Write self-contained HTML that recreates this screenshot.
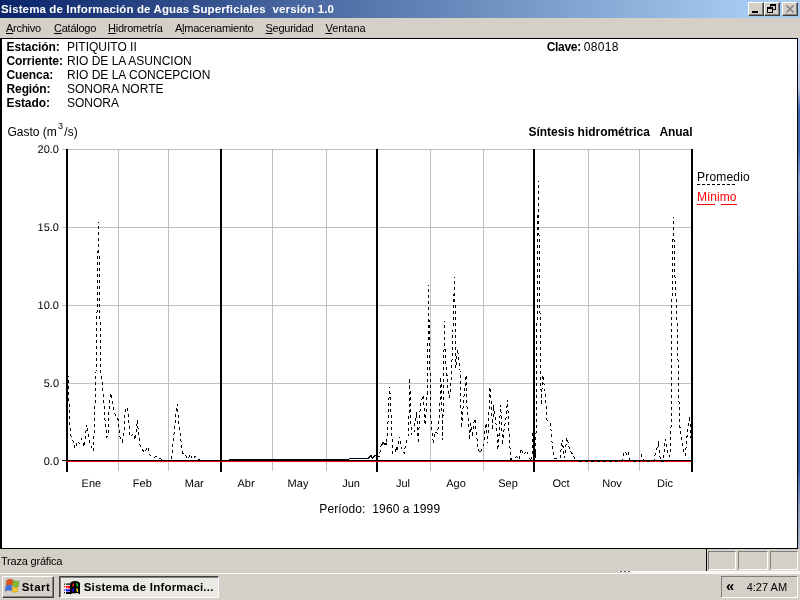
<!DOCTYPE html>
<html lang="es">
<head>
<meta charset="utf-8">
<title>Sistema de Información de Aguas Superficiales versión 1.0</title>
<style>
html,body{margin:0;padding:0;}
body{width:800px;height:600px;overflow:hidden;position:relative;will-change:transform;background:#d4d0c8;font-family:"Liberation Sans",Arial,sans-serif;font-size:11px;color:#000;}
.abs{position:absolute;white-space:pre;}
#title{left:0;top:0;width:800px;height:18px;background:linear-gradient(to right,#0a246a 0px,#a6caf0 746px,#a6caf0 800px);}
#title .t{left:1px;top:3px;color:#fff;font-weight:bold;font-size:11.5px;line-height:13px;letter-spacing:0.13px;}
.tb{position:absolute;top:2px;width:16px;height:14px;background:#d4d0c8;box-sizing:border-box;border:1px solid;border-color:#fff #404040 #404040 #fff;box-shadow:inset -1px -1px 0 #808080;}
#menu{left:0;top:18px;width:800px;height:20px;background:#d4d0c8;}
#menu span{position:absolute;top:4px;line-height:13px;font-size:11px;white-space:pre;letter-spacing:-0.25px;}
#menu u{text-decoration:underline;text-underline-offset:1px;}
#mdi{left:0;top:38px;width:798px;height:511px;background:#fff;box-sizing:border-box;border:1px solid #000;border-left-width:2px;}
#strip{left:798px;top:38px;width:2px;height:511px;background:linear-gradient(to bottom,#c8d4ee 0%,#b4c4e6 10%,#3a68b0 14%,#3a68b0 22%,#8aa4d4 28%,#5078b8 40%,#2c5aa8 52%,#2c5aa8 84%,#8a9cc0 92%,#b0b8c8 100%);}
.lbl{font-size:12px;line-height:14px;font-weight:bold;letter-spacing:-0.1px;}
.val{font-size:12px;line-height:14px;}
#status{left:0;top:549px;width:800px;height:24px;background:#d4d0c8;}
.sp{position:absolute;top:2px;height:19px;box-sizing:border-box;border:1px solid;border-color:#808080 #fff #fff #808080;}
#taskbar{left:0;top:573px;width:800px;height:27px;background:#d4d0c8;border-top:1px solid #fff;box-sizing:border-box;}
.btn{position:absolute;box-sizing:border-box;background:#d4d0c8;border:1px solid;border-color:#fff #404040 #404040 #fff;box-shadow:inset -1px -1px 0 #808080;}
</style>
</head>
<body>
<div id="title" class="abs"><span class="abs t">Sistema de Información de Aguas Superficiales  versión 1.0</span>
<div class="tb" style="left:748px"><svg width="14" height="12" style="position:absolute;left:0;top:0"><rect x="3" y="8" width="6" height="2" fill="#000"/></svg></div>
<div class="tb" style="left:764px"><svg width="14" height="12" style="position:absolute;left:0;top:0" shape-rendering="crispEdges"><rect x="5" y="1" width="6" height="2" fill="#000"/><rect x="5" y="1" width="1" height="3" fill="#000"/><rect x="10" y="1" width="1" height="6" fill="#000"/><rect x="8" y="6" width="3" height="1" fill="#000"/><rect x="2" y="4" width="6" height="2" fill="#000"/><rect x="2" y="4" width="1" height="6" fill="#000"/><rect x="7" y="4" width="1" height="6" fill="#000"/><rect x="2" y="9" width="6" height="1" fill="#000"/></svg></div>
<div class="tb" style="left:782px"><svg width="14" height="12" style="position:absolute;left:0;top:0"><path d="M3.5 2.5 L10.5 9.5 M10.5 2.5 L3.5 9.5" stroke="#808080" stroke-width="1.6" fill="none"/></svg></div>
</div>
<div id="menu" class="abs">
<span style="left:6px"><u>A</u>rchivo</span>
<span style="left:54px"><u>C</u>atálogo</span>
<span style="left:108px"><u>H</u>idrometría</span>
<span style="left:175px">A<u>l</u>macenamiento</span>
<span style="left:265.5px"><u>S</u>eguridad</span>
<span style="left:325.5px;letter-spacing:-0.05px"><u>V</u>entana</span>
</div>
<div id="mdi" class="abs"></div>
<div id="strip" class="abs"></div>
<div class="abs" style="left:2px;top:39px;width:796px;height:509px;overflow:hidden">
<svg id="chart" style="position:absolute;left:0;top:0;display:block" width="796" height="509" viewBox="2 39 796 509" shape-rendering="crispEdges">
<rect x="62" y="149" width="630" height="1" fill="#c0c0c0"/>
<rect x="62" y="227" width="630" height="1" fill="#c0c0c0"/>
<rect x="62" y="305" width="630" height="1" fill="#c0c0c0"/>
<rect x="62" y="383" width="630" height="1" fill="#c0c0c0"/>
<rect x="118" y="149" width="1" height="322" fill="#c0c0c0"/>
<rect x="168" y="149" width="1" height="322" fill="#c0c0c0"/>
<rect x="272" y="149" width="1" height="322" fill="#c0c0c0"/>
<rect x="326" y="149" width="1" height="322" fill="#c0c0c0"/>
<rect x="430" y="149" width="1" height="322" fill="#c0c0c0"/>
<rect x="483" y="149" width="1" height="322" fill="#c0c0c0"/>
<rect x="588" y="149" width="1" height="322" fill="#c0c0c0"/>
<rect x="639" y="149" width="1" height="322" fill="#c0c0c0"/>
<rect x="62" y="460" width="630" height="1" fill="#000"/>
<rect x="66" y="461" width="626" height="1" fill="#f00"/>
<polyline points="98.5,222 96.0,373.3 95.0,403.3 94.2,428.3 93.3,451.2 91.7,447.5 90.0,443.3 88.3,435.0 86.7,424.7 84.2,447.0 81.7,438.7 79.7,443.7 78.0,441.3 76.7,444.2 74.7,448.7 73.0,440.8 71.7,438.3 70.3,433.3 69.4,412 68.8,395 68.4,376" fill="none" stroke="#000" stroke-width="1" stroke-dasharray="3 3" stroke-dashoffset="1.5"/>
<polyline points="98.5,222 100.8,371.7 102.5,383.3 103.7,401.7 105.0,420.0 107.0,437.5 108.3,431.7 109.2,403.3 110.8,393.3 112.5,400.0 114.2,411.7 116.7,418.3 118.3,420.0 120.0,436.7 122.5,441.7 124.2,428.3 125.3,410.0 127.2,407.5 128.3,415.0 130.0,435.0 130.8,436.7 133.3,433.3 135.0,440.0 137.5,420.0 138.3,433.3 140.0,445.0 142.5,450.0 145.0,452.5 147.5,446.7 150.0,455.0 153.3,457.5 156.7,456.7 161.7,459.2 168.3,460.8" fill="none" stroke="#000" stroke-width="1" stroke-dasharray="3 3" stroke-dashoffset="1.5"/>
<polyline points="428.3,285 428.0,340 427.5,390.0 425.8,415.0 425.0,425.0 423.3,395.0 420.8,403.3 419.5,416.7 418.3,443.3 416.7,411.7 415.0,423.3 413.7,434.2 411.3,435.0 410.3,403.3 409.7,378.3 409.2,411.7 408.0,436.7 405.8,443.3 404.2,453.3 402.5,451.7 400.8,443.3 399.2,436.7 397.5,451.7 395.8,446.7 395.0,453.3 392.5,453.3 391.3,420.0 390.3,400.0 389.7,386.7 388.7,403.3 387.5,436.7 385.8,445.0 383.3,442.5 380.8,446.7 379.2,456.7 377.0,457.5 375,455 373,458 371,455 369,457 368,458.5 350,458.5 349,459 229,459 229,460 203.3,460.0 200.0,460.0 197.5,458.3 195.0,456.3 192.5,459.2 190.3,454.2 188.0,459.2 185.8,455.8 183.3,455.0 181.7,446.7 180.0,433.3 178.3,418.3 177.5,404.2 175.8,415.0 175.0,425.0 173.3,440.0 172.5,450.0 170.8,460.0 168.3,460.8" fill="none" stroke="#000" stroke-width="1" stroke-dasharray="3 3" stroke-dashoffset="1.5"/>
<polyline points="428.3,285 429.2,330 430,370 430.0,383.3 430.3,411.7 431.7,426.7 433.3,443.3" fill="none" stroke="#000" stroke-width="1" stroke-dasharray="3 3" stroke-dashoffset="1.5"/>
<polyline points="444.5,321 444.0,350 443.3,403.3 442.5,440.0 441.7,395.0 440.8,376.7 440.0,400.0 439.2,420.0 437.5,433.3 435.0,431.7 433.3,443.3" fill="none" stroke="#000" stroke-width="1" stroke-dasharray="3 3" stroke-dashoffset="1.5"/>
<polyline points="444.5,321 445.3,360 447.5,380.0 448.3,395.0 449.7,398.3" fill="none" stroke="#000" stroke-width="1" stroke-dasharray="3 3" stroke-dashoffset="1.5"/>
<polyline points="454.5,277 453,330 451.7,370.0 450.8,386.7 449.7,398.3" fill="none" stroke="#000" stroke-width="1" stroke-dasharray="3 3" stroke-dashoffset="1.5"/>
<polyline points="454.5,277 455.5,330 456,368 456.5,355 457.5,349 459,360 460,370 460.8,403.3 461.7,428.3 463.3,403.3 465.0,386.7 466.2,375.0 466.7,403.3 468.3,420.0 469.7,440.0 470.8,423.3 472.5,436.7 473.3,425.0 475.0,418.3 476.7,436.7 478.3,450.0 480.3,453.3 482.5,446.7 484.2,443.3 485.0,428.3 486.3,423.3 487.5,443.3 488.7,420.0 490.0,386.7 491.3,403.3 492.5,430.0 493.7,405.0 495.0,416.7 496.7,428.3 497.8,450.0 499.2,433.3 500.5,405.0 501.7,421.7 502.5,445.0 504.2,428.3 505.8,420.0 507.5,400.0 508.7,426.7 510.0,448.3 510.8,459.2 514.2,458.3 516.7,456.7 519.2,459.2 521.3,448.3 523.3,455.0 525.0,453.3 527.0,450.8 529.2,458.3 530.8,460.0" fill="none" stroke="#000" stroke-width="1" stroke-dasharray="3 3" stroke-dashoffset="1.5"/>
<polyline points="538.3,181 535.8,458 534.2,447 534.2,386.7 533.3,420.0 532.5,451.7 530.8,460.0" fill="none" stroke="#000" stroke-width="1" stroke-dasharray="3 3" stroke-dashoffset="1.5"/>
<polyline points="538.3,181 541.2,405 542.7,374.6 545.5,394 547,420 550.3,422 552.5,448 554.6,458.5 560,458 562.2,439.6 564.4,458 567,437.4 569.8,450.4 573,454.7 576.3,461.5" fill="none" stroke="#000" stroke-width="1" stroke-dasharray="3 3" stroke-dashoffset="1.5"/>
<polyline points="673.6,217 672.2,268 671.8,330 671.1,422.5 670.5,455.0 669.2,456.7 667.6,451.8 665.1,438.8 663.5,461.5 661.1,461.5 659.4,455.0 658.6,441.2 656.2,451.8 654.6,456.7 653.7,461.5 644.0,461.5 641.5,455.0 639.6,461.5 630.2,461.5 628.5,452.6 626.9,455.0 625.3,451.5 623.7,452.6 622,461.5 576.3,461.5" fill="none" stroke="#000" stroke-width="1" stroke-dasharray="3 3" stroke-dashoffset="1.5"/>
<polyline points="673.6,217 674.4,263 677.4,330 678.6,390 679.8,425.8 681.4,438.8 683.8,453.4 685.4,455.0 687.1,435.5 689.5,416.0 691.1,438.8" fill="none" stroke="#000" stroke-width="1" stroke-dasharray="3 3" stroke-dashoffset="1.5"/>
<rect x="229" y="459" width="120" height="1" fill="#000"/>
<rect x="349" y="458" width="20" height="1" fill="#000"/>
<polyline points="368,458.5 369.5,457 371,455.5 372.5,458.5 374,456.5 376,455.5" fill="none" stroke="#000" stroke-width="1"/>
<polyline points="381.5,445.5 383,442.5 384.5,444.5 386,443.5 387.5,445.5" fill="none" stroke="#000" stroke-width="1"/>
<rect x="66" y="149" width="2" height="323" fill="#000"/>
<rect x="220" y="149" width="2" height="323" fill="#000"/>
<rect x="376" y="149" width="2" height="323" fill="#000"/>
<rect x="533" y="149" width="2" height="323" fill="#000"/>
<rect x="691" y="149" width="2" height="323" fill="#000"/>
<rect x="66" y="461" width="2" height="1" fill="#d00000"/>
<rect x="220" y="461" width="2" height="1" fill="#d00000"/>
<rect x="376" y="461" width="2" height="1" fill="#d00000"/>
<rect x="533" y="461" width="2" height="1" fill="#d00000"/>
<line x1="697" y1="184.5" x2="736" y2="184.5" stroke="#000" stroke-dasharray="3 2"/>
<rect x="697" y="204" width="18" height="1" fill="#f00"/><rect x="721" y="204" width="16" height="1" fill="#f00"/>
<g font-family="'Liberation Sans', Arial, sans-serif" font-size="11px" fill="#000" text-rendering="geometricPrecision">
<text x="59" y="153" text-anchor="end">20.0</text>
<text x="59" y="231" text-anchor="end">15.0</text>
<text x="59" y="309" text-anchor="end">10.0</text>
<text x="59" y="387" text-anchor="end">5.0</text>
<text x="59" y="465" text-anchor="end">0.0</text>
<text x="91.4" y="487" text-anchor="middle">Ene</text>
<text x="142.3" y="487" text-anchor="middle">Feb</text>
<text x="194.3" y="487" text-anchor="middle">Mar</text>
<text x="246" y="487" text-anchor="middle">Abr</text>
<text x="298" y="487" text-anchor="middle">May</text>
<text x="351" y="487" text-anchor="middle">Jun</text>
<text x="403" y="487" text-anchor="middle">Jul</text>
<text x="456" y="487" text-anchor="middle">Ago</text>
<text x="508" y="487" text-anchor="middle">Sep</text>
<text x="561" y="487" text-anchor="middle">Oct</text>
<text x="612" y="487" text-anchor="middle">Nov</text>
<text x="665" y="487" text-anchor="middle">Dic</text>
</g>
</svg>
</div>
<div class="abs lbl" style="left:6.5px;top:40px">Estación:</div><div class="abs val" style="left:67px;top:40px">PITIQUITO II</div>
<div class="abs lbl" style="left:6.5px;top:54px">Corriente:</div><div class="abs val" style="left:67px;top:54px">RIO DE LA ASUNCION</div>
<div class="abs lbl" style="left:6.5px;top:68px">Cuenca:</div><div class="abs val" style="left:67px;top:68px">RIO DE LA CONCEPCION</div>
<div class="abs lbl" style="left:6.5px;top:82px">Región:</div><div class="abs val" style="left:67px;top:82px">SONORA NORTE</div>
<div class="abs lbl" style="left:6.5px;top:96px">Estado:</div><div class="abs val" style="left:67px;top:96px">SONORA</div>
<div class="abs lbl" style="left:546.7px;top:40px;letter-spacing:-0.3px">Clave: <span style="font-weight:normal;letter-spacing:0.35px;margin-left:-0.3px">08018</span></div>
<div class="abs val" style="left:7.5px;top:125px">Gasto (m<span style="font-size:9px;position:relative;top:-7.5px;display:inline-block;width:7.5px;text-align:center;line-height:9px">3</span>/s)</div>
<div class="abs lbl" style="left:528.5px;top:125px;letter-spacing:-0.03px">Síntesis hidrométrica   Anual</div>
<div class="abs val" style="left:697px;top:170px;letter-spacing:0.2px">Promedio</div>
<div class="abs val" style="left:697px;top:190px;color:#f00">Mínimo</div>
<div class="abs val" style="left:319.3px;top:502px;letter-spacing:0.1px">Período:  1960 a 1999</div>
<div id="status" class="abs"><span class="abs" style="left:1px;top:6px;line-height:13px;letter-spacing:-0.2px">Traza gráfica</span>
<div class="abs" style="left:706px;width:1px;top:0;height:22px;background:#000"></div>
<div class="sp" style="left:708px;width:28px"></div>
<div class="sp" style="left:738px;width:30px"></div>
<div class="sp" style="left:770px;width:28px"></div>
</div>
<div class="abs" style="left:618px;top:571px;width:182px;height:1px;background:#fff"></div><div class="abs" style="left:631px;top:572px;width:169px;height:1px;background:#f2f1ee"></div><div class="abs" style="left:620px;top:571px;width:2px;height:1px;background:#606060"></div><div class="abs" style="left:624px;top:571px;width:2px;height:1px;background:#606060"></div><div class="abs" style="left:628px;top:571px;width:2px;height:1px;background:#606060"></div>
<div id="taskbar" class="abs">
<div class="btn" style="left:2px;top:2px;width:52px;height:22px"><svg width="17" height="17" style="position:absolute;left:0px;top:0px" viewBox="0 0 17 17"><path d="M3.9 3.2 Q6.8 1.2 9.9 3.0 L9.4 8.0 Q6.4 6.6 3.2 8.4 Z" fill="#e5531d" stroke="#a83a12" stroke-width="0.5"/><path d="M10.6 3.6 Q13.2 5.2 15.8 3.9 L15.3 9.2 Q12.8 10.4 10.1 8.9 Z" fill="#7cc02c" stroke="#4d8a18" stroke-width="0.5"/><path d="M3.0 9.0 Q5.9 7.3 8.9 8.8 L8.3 13.6 Q5.3 12.3 2.2 14.0 Z" fill="#3d74e0" stroke="#2a4fa8" stroke-width="0.5"/><path d="M9.6 9.6 Q12.2 11.2 15.0 10.0 L14.5 14.8 Q11.8 16.0 9.1 14.5 Z" fill="#f2c52c" stroke="#b8901a" stroke-width="0.5"/></svg><span class="abs" style="left:18.7px;top:4px;font-weight:bold;line-height:13px;font-size:11.5px;letter-spacing:0.5px">Start</span></div>
<div class="abs" style="left:59px;top:2px;width:160px;height:22px;box-sizing:border-box;border:1px solid;border-color:#404040 #fff #fff #404040;box-shadow:inset 1px 1px 0 #808080;background:#ebe9e4"><svg width="19" height="18" style="position:absolute;left:3px;top:2px" viewBox="0 0 19 18"><path d="M7 4.2 C8.5 2.4 10.5 1.6 12 2 C13.5 1.8 15.8 2.6 17 4 L17 15.4 C15.6 14.2 14 13.8 12 14.4 C10.4 13.8 8.6 14.4 7 15.6 Z" fill="#000"/><rect x="1" y="4.5" width="1" height="1.2" fill="#000"/><rect x="3" y="4.5" width="4" height="1.2" fill="#000"/><rect x="1" y="7" width="1.2" height="1.2" fill="#f00"/><rect x="3" y="7" width="4" height="2.4" fill="#f00"/><rect x="4" y="8.2" width="1" height="1" fill="#fff"/><rect x="1" y="10.5" width="1.2" height="1.2" fill="#00f"/><rect x="3" y="10.2" width="4" height="2.2" fill="#00f"/><rect x="4.4" y="10.2" width="1" height="1" fill="#fff"/><rect x="1" y="13" width="1" height="1.2" fill="#000"/><rect x="3" y="13" width="4" height="2" fill="#000"/><path d="M9.6 4.6 L11.2 4.2 L10.8 7.6 L9.2 8 Z" fill="#f01818"/><path d="M13.2 4.1 L14.8 4.6 L15.2 7.8 L13.6 7.4 Z" fill="#18d018"/><path d="M9.6 9.6 L11.2 9.2 L10.8 12.4 L9.2 12.8 Z" fill="#1818f0"/><path d="M13.2 9.3 L14.8 9.8 L15.2 13 L13.6 12.6 Z" fill="#f0f018"/></svg><span class="abs" style="left:23.7px;top:4px;font-weight:bold;line-height:13px;font-size:11.5px;letter-spacing:0.2px">Sistema de Informaci...</span></div>
<div class="abs" style="left:721px;top:2px;width:77px;height:22px;box-sizing:border-box;border:1px solid;border-color:#808080 #fff #fff #808080"><span class="abs" style="left:4px;top:2px;font-weight:bold;line-height:14px;font-size:15px">«</span><span class="abs" style="left:24.7px;top:4px;line-height:13px">4:27 AM</span></div>
</div>
</body>
</html>
